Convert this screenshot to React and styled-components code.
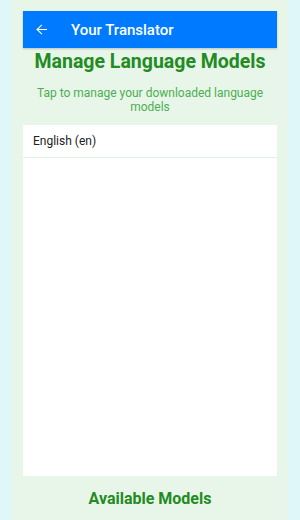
import React from 'react'
import styled, { createGlobalStyle } from 'styled-components'

const Global = createGlobalStyle`
  html, body {
    margin: 0;
    padding: 0;
    background: #e0f7fa;
    font-family: Roboto, "Noto Sans", sans-serif;
  }
`

const Screen = styled.div`
  margin: 0 12px;
  height: 520px;
  background: #e8f5e9;
  padding: 11px 11px 0;
  box-sizing: border-box;
  display: flex;
  flex-direction: column;
`

const AppBar = styled.div`
  height: 37px;
  flex-shrink: 0;
  background: #007bff;
  display: flex;
  align-items: center;
  padding-left: 12px;
  box-shadow: 0 1px 2px rgba(0, 0, 0, 0.2);
  color: #fff;
`

const Back = styled.button`
  border: 0;
  background: none;
  padding: 0;
  width: 13px;
  height: 13px;
  display: flex;
  color: #fff;
  margin-right: 23px;
`

const BarTitle = styled.div`
  font-size: 15px;
  font-weight: 500;
`

const Heading = styled.h1`
  margin: 3px 0 0;
  text-align: center;
  font-size: 19.5px;
  line-height: 22px;
  font-weight: 700;
  color: #228b22;
`

const Hint = styled.p`
  margin: 13px 0 0;
  padding: 0 10px;
  text-align: center;
  font-size: 12px;
  line-height: 14px;
  color: #4caf50;
`

const List = styled.div`
  margin-top: 11px;
  flex: 1;
  background: #fff;
`

const Row = styled.div`
  height: 32px;
  display: flex;
  align-items: center;
  padding-left: 10px;
  font-size: 12px;
  color: #212121;
  border-bottom: 1px solid #e1f2e3;
`

const Footer = styled.div`
  height: 44px;
  flex-shrink: 0;
  display: flex;
  align-items: center;
  justify-content: center;
  font-size: 16px;
  font-weight: 700;
  color: #228b22;
`

const models = ['English (en)']

export default function App() {
  return (
    <>
      <Global />
      <Screen>
        <AppBar>
          <Back aria-label="back">
            <svg width="13" height="13" viewBox="0 0 24 24" fill="none" stroke="currentColor" strokeWidth="2" strokeLinecap="square">
              <path d="M21 12H4" />
              <path d="M12 4l-8 8 8 8" />
            </svg>
          </Back>
          <BarTitle>Your Translator</BarTitle>
        </AppBar>
        <Heading>Manage Language Models</Heading>
        <Hint>Tap to manage your downloaded language models</Hint>
        <List>
          {models.map((m) => (
            <Row key={m}>{m}</Row>
          ))}
        </List>
        <Footer>Available Models</Footer>
      </Screen>
    </>
  )
}
